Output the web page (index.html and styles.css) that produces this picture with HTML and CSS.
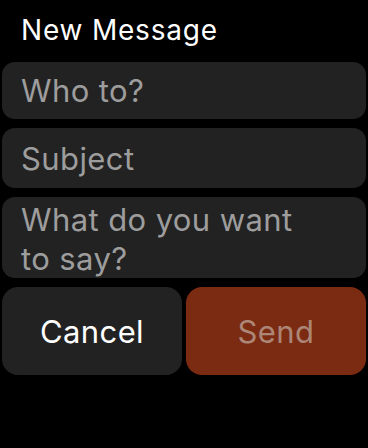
FILE: index.html
```html
<!DOCTYPE html>
<html>
<head>
<meta charset="utf-8">
<link rel="stylesheet" href="styles.css">
</head>
<body>
<div class="screen">
  <div class="title">New Message</div>
  <div class="fields">
    <div class="field field-to"><span>Who to?</span></div>
    <div class="field field-subject"><span>Subject</span></div>
    <div class="field field-body"><span>What do you want to say?</span></div>
    <div class="buttons">
      <div class="btn btn-cancel">Cancel</div>
      <div class="btn btn-send">Send</div>
    </div>
  </div>
</div>
</body>
</html>
```
FILE: styles.css
```css
html, body {
  margin: 0;
  padding: 0;
  background: #000;
}
body {
  width: 368px;
  height: 448px;
  overflow: hidden;
  font-family: Inter, "Noto Sans", sans-serif;
}
.screen {
  padding: 0 2px;
  display: flex;
  flex-direction: column;
}
.title {
  height: 62px;
  box-sizing: border-box;
  padding: 13px 0 0 19px;
  color: #fff;
  font-size: 28px;
  line-height: 34px;
  letter-spacing: 0.8px;
}
.fields {
  display: flex;
  flex-direction: column;
  gap: 9px;
}
.field {
  background: #222222;
  border-radius: 13px;
  display: flex;
  align-items: center;
  padding-left: 19px;
  color: #9d9d9d;
  font-size: 31px;
  line-height: 1;
  letter-spacing: 0.4px;
}
.field-to { height: 57px; }
.field-subject { height: 60px; }
.field-body {
  height: 81px;
  box-sizing: border-box;
  align-items: flex-start;
  padding-top: 3px;
  padding-right: 60px;
  line-height: 39px;
  overflow: hidden;
}
.buttons {
  display: flex;
  gap: 4px;
  height: 88px;
}
.btn {
  flex: 1;
  border-radius: 16px;
  display: flex;
  align-items: center;
  justify-content: center;
  font-size: 31px;
  letter-spacing: 0.4px;
}
.btn-cancel {
  background: #222222;
  color: #fff;
}
.btn-send {
  background: #7b2b12;
  color: #ac8677;
}
```
